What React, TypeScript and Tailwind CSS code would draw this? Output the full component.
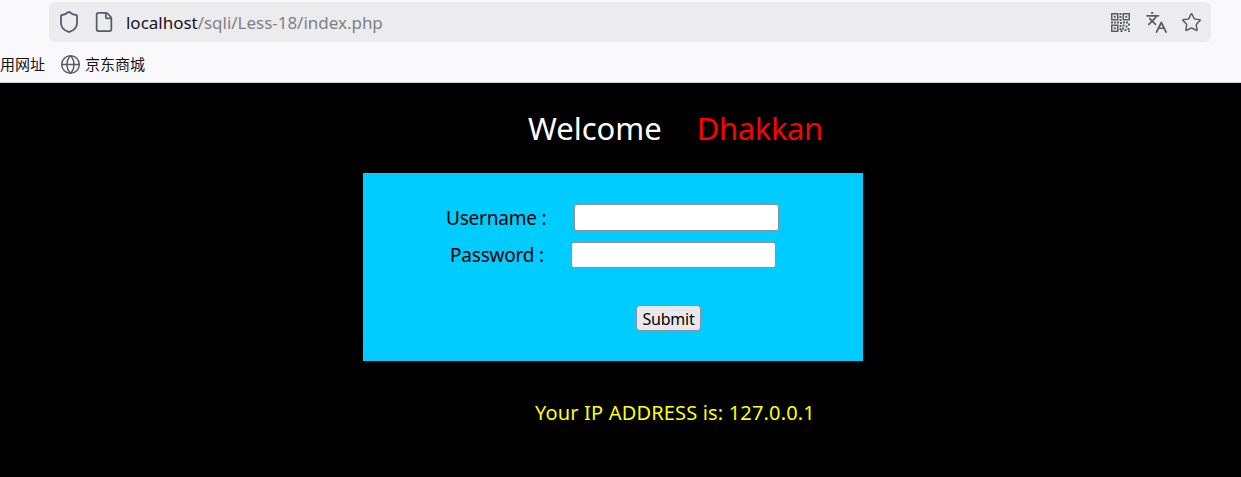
import React from 'react';
import { File, Globe, Languages, Shield, Star } from 'lucide-react';

const uiFont = "font-['Noto_Sans','Noto_Sans_CJK_SC',sans-serif]";

function QrIcon() {
  return (
    <svg width="19" height="19" viewBox="0 0 19 19" fill="#5b5b66">
      <path fillRule="evenodd" d="M0 0h7.5v7.5H0zM1.5 1.5v4.500h4.500v-4.500zM11.500 0H19v7.500h-7.500zM13 1.500v4.500h4.500v-4.500zM0 11.500h7.500V19H0zM1.500 13v4.500h4.500V13z" />
      <rect x="2.750" y="2.750" width="2" height="2" />
      <rect x="14.250" y="2.750" width="2" height="2" />
      <rect x="2.750" y="14.250" width="2" height="2" />
      <rect x="8.500" y="0" width="2" height="2" />
      <rect x="8.500" y="3" width="2" height="2" />
      <rect x="8.500" y="6" width="2" height="2" />
      <rect x="0" y="8.500" width="2" height="2" />
      <rect x="3" y="8.500" width="2" height="2" />
      <rect x="6" y="8.500" width="2" height="2" />
      <rect x="9" y="9" width="2" height="2" />
      <rect x="12" y="8.500" width="2" height="2" />
      <rect x="15" y="8.500" width="2" height="2" />
      <rect x="17" y="10.500" width="2" height="2" />
      <rect x="8.500" y="12" width="2" height="2" />
      <rect x="11.500" y="11.500" width="2" height="2" />
      <rect x="14.500" y="12.500" width="2" height="2" />
      <rect x="8.500" y="15" width="2" height="2" />
      <rect x="11" y="14.500" width="2" height="2" />
      <rect x="13.500" y="16" width="2" height="2" />
      <rect x="9.500" y="17" width="2" height="2" />
      <rect x="16.500" y="15" width="2" height="2" />
      <rect x="17" y="17.500" width="2" height="1.500" />
    </svg>
  );
}

export default function App() {
  return (
    <div className="h-[477px] w-[1241px] overflow-hidden bg-black">
      <div className={`${uiFont} h-[83px] border-b border-[#d0d0d4] bg-[#f9f9fb]`}>
        <div className="pl-[49px] pr-[30px] pt-[2px]">
          <div className="flex h-10 items-center rounded-md bg-[#ececee] pl-[8px] pr-[9px]">
            <Shield className="h-[24px] w-[24px] text-[#5b5b66]" strokeWidth={1.8} />
            <File className="ml-[12px] h-[22px] w-[22px] text-[#5b5b66]" strokeWidth={1.9} />
            <div className="ml-[11px] text-[17px] leading-none tracking-[-0.02px] text-[#15141a]">
              localhost<span className="text-[#808086]">/sqli/Less-18/index.php</span>
            </div>
            <div className="ml-auto flex items-center">
              <QrIcon />
              <Languages className="ml-[15px] h-[23px] w-[23px] text-[#5b5b66]" strokeWidth={1.8} />
              <Star className="ml-[13px] h-[21px] w-[21px] text-[#5b5b66]" strokeWidth={1.7} />
            </div>
          </div>
        </div>
        <div className="flex h-[40px] items-center pt-[5px] text-[15px] text-[#15141a]">
          <span>用网址</span>
          <Globe className="ml-[15px] h-[21px] w-[21px] text-[#5b5b66]" strokeWidth={1.7} />
          <span className="ml-[4px]">京东商城</span>
        </div>
      </div>

      <div className={uiFont}>
        <div className="flex h-[90px] items-center pl-[528px] text-[31px] leading-none">
          <span className="text-white">Welcome</span>
          <span className="ml-[35px] tracking-[-0.4px] text-[#ff0000]">Dhakkan</span>
        </div>
        <form className="ml-[363px] h-[188px] w-[500px] bg-[#00ccff] text-black">
          <div className="flex items-center pl-[83px] pt-[31px]">
            <label className="text-[19px] leading-[26px] tracking-[-0.2px]">Username :</label>
            <input className="ml-[28px] h-[27px] w-[205px] rounded-[3px] border border-[#8f8f9d] bg-white" />
          </div>
          <div className="flex items-center pl-[87px] pt-[11px]">
            <label className="text-[19px] leading-[26px] tracking-[-0.2px]">Password :</label>
            <input className="ml-[27px] h-[26px] w-[205px] rounded-[3px] border border-[#8f8f9d] bg-white" />
          </div>
          <div className="pl-[273px] pt-[37px]">
            <button type="button" className="h-[26px] w-[65px] rounded-[4px] border border-[#8f8f9d] bg-[#e9e9ed] pt-[2px] text-[16px] leading-none tracking-[-0.2px] text-black">
              Submit
            </button>
          </div>
        </form>
        <div className="pl-[535px] pt-[38px] text-[20px] leading-[28px] tracking-[0.17px] text-[#ffff00]">
          Your IP ADDRESS is: 127.0.0.1
        </div>
      </div>
    </div>
  );
}
